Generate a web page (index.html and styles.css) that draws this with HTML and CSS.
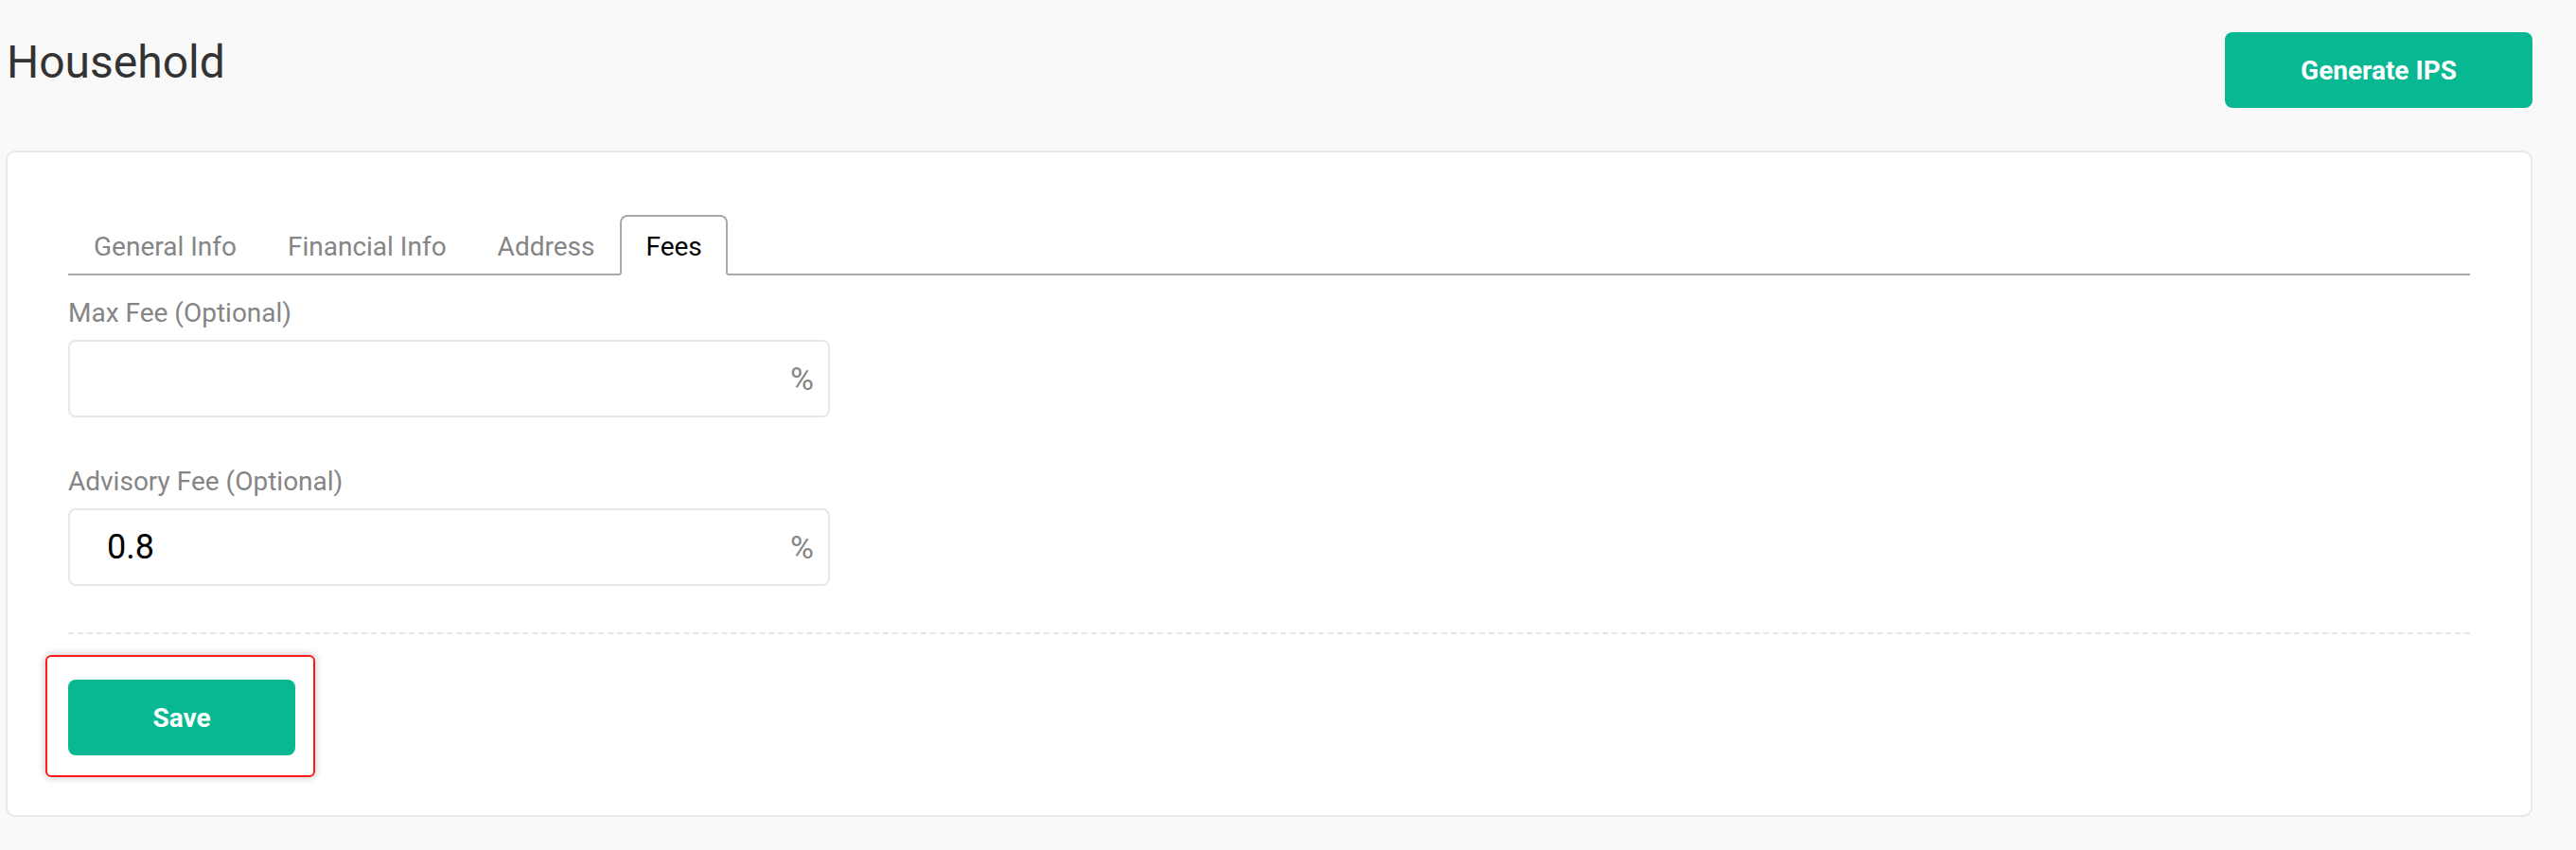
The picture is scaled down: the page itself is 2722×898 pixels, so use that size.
FILE: index.html
```html
<!DOCTYPE html>
<html lang="en">
<head>
<meta charset="utf-8">
<title>Household</title>
<link rel="stylesheet" href="styles.css">
</head>
<body>
<div class="page">
  <header class="page-header">
    <h1 class="page-title">Household</h1>
    <button class="btn btn-generate" type="button">Generate IPS</button>
  </header>
  <section class="card">
    <nav class="tabs">
      <span class="tab">General Info</span>
      <span class="tab">Financial Info</span>
      <span class="tab">Address</span>
      <span class="tab tab-active">Fees</span>
    </nav>
    <div class="field field-first">
      <label class="field-label">Max Fee (Optional)</label>
      <div class="input-box">
        <span class="input-value"></span>
        <span class="input-suffix">%</span>
      </div>
    </div>
    <div class="field field-second">
      <label class="field-label">Advisory Fee (Optional)</label>
      <div class="input-box">
        <span class="input-value">0.8</span>
        <span class="input-suffix">%</span>
      </div>
    </div>
    <div class="divider"></div>
    <div class="actions">
      <button class="btn btn-save" type="button">Save</button>
    </div>
  </section>
</div>
</body>
</html>
```

FILE: styles.css
```css
* {
  box-sizing: border-box;
}

html, body {
  margin: 0;
  padding: 0;
  background: #f9f9f9;
  font-family: Roboto, "Liberation Sans", Arial, sans-serif;
}

.page {
  width: 2722px;
  height: 898px;
  padding: 0 46px 0 6px;
  overflow: hidden;
}

.page-header {
  display: flex;
  justify-content: space-between;
  align-items: flex-start;
  padding-top: 34px;
  margin-bottom: 45px;
}

.page-title {
  margin: 4px 0 0 1px;
  font-size: 48px;
  line-height: 56px;
  font-weight: 400;
  color: #333333;
}

.btn {
  border: none;
  background: #08b893;
  color: #ffffff;
  font-family: Roboto, "Liberation Sans", Arial, sans-serif;
  font-weight: 700;
  font-size: 28px;
  border-radius: 8px;
  display: flex;
  align-items: center;
  justify-content: center;
  padding: 0;
}

.btn-generate {
  width: 325px;
  height: 80px;
}

.card {
  background: #ffffff;
  border: 2px solid #e8e8e8;
  border-radius: 10px;
  padding: 66px 64px 63px 64px;
}

.tabs {
  display: flex;
  border-bottom: 2px solid #a9a9a9;
}

.tab {
  display: block;
  border: 2px solid transparent;
  border-radius: 8px 8px 0 0;
  margin-bottom: -2px;
  padding: 15px 25px 12px 25px;
  font-size: 28px;
  line-height: 33px;
  color: #858585;
}

.tab-active {
  border-color: #a9a9a9;
  border-bottom-color: #ffffff;
  background: #ffffff;
  color: #000000;
}

.field {
  display: flex;
  flex-direction: column;
  width: 805px;
}

.field-first {
  margin-top: 23px;
}

.field-second {
  margin-top: 51px;
}

.field-label {
  font-size: 28px;
  line-height: 33px;
  color: #858585;
  margin-bottom: 12px;
}

.input-box {
  height: 82px;
  border: 2px solid #e8e8e8;
  border-radius: 8px;
  display: flex;
  align-items: center;
  justify-content: space-between;
  padding: 0 15px 0 39px;
}

.input-value {
  font-size: 36px;
  color: #000000;
}

.input-suffix {
  font-size: 34px;
  color: #858585;
}

.divider {
  margin-top: 49px;
  border-top: 2px dashed #e6e6e6;
}

.actions {
  margin-top: 48px;
  display: flex;
}

.btn-save {
  position: relative;
  width: 240px;
  height: 80px;
}

.btn-save::after {
  content: "";
  position: absolute;
  top: -26px;
  left: -24px;
  right: -21px;
  bottom: -23px;
  border: 2px solid #ff1a1a;
  border-radius: 6px;
  box-shadow: 0 0 8px rgba(0, 0, 0, 0.25);
  pointer-events: none;
}
```
